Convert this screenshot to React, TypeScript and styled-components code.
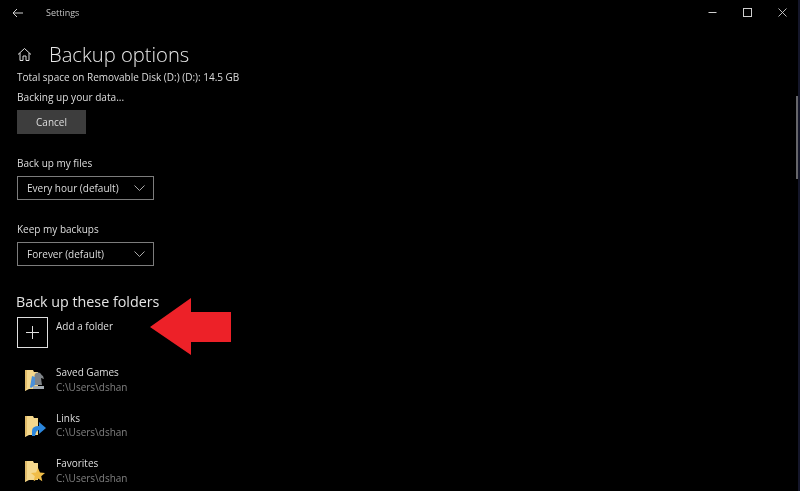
import styled, { createGlobalStyle } from "styled-components";

const GlobalStyle = createGlobalStyle`
  html, body {
    margin: 0;
    padding: 0;
    background: #000;
    overflow: hidden;
  }
`;

const Window = styled.div`
  position: relative;
  width: 800px;
  height: 491px;
  overflow: hidden;
  background: #000;
  color: #e6e6e6;
  font-family: "Open Sans", "Liberation Sans", sans-serif;
  filter: blur(0.3px);
`;
const TitleBar = styled.header`
  height: 25px;
  display: flex;
  align-items: center;
  padding-left: 12px;
`;
const BackButton = styled.span`
  display: flex;
  width: 34px;
`;
const AppName = styled.span`
  font-size: 9px;
  color: #c4c4c4;
`;
const WindowButtons = styled.div`
  margin-left: auto;
  margin-right: 13px;
  display: flex;
  gap: 26px;
  align-items: center;
  color: #cfcfcf;
`;
const Content = styled.main`
  padding: 15px 0 0 17px;
`;
const PageTitle = styled.div`
  display: flex;
  align-items: center;
  height: 28px;
`;
const HomeIcon = styled.span`
  display: flex;
  width: 32px;
`;
const Heading = styled.h1`
  margin: 0;
  font-size: 20.2px;
  font-weight: 300;
  color: #e8e8e8;
`;
const Info = styled.div`
  font-size: 10px;
  height: 14px;
  line-height: 14px;
  margin-top: 2px;
  color: #dedede;
`;
const Status = styled(Info)`
  margin-top: 6px;
  font-size: 10.1px;
`;
const CancelButton = styled.button`
  display: block;
  width: 69px;
  height: 24px;
  margin-top: 6px;
  padding: 0;
  border: 0;
  background: #3d3d3d;
  color: #dedede;
  font: inherit;
  font-size: 10px;
`;
const FieldLabel = styled.div`
  font-size: 10px;
  line-height: 14px;
  color: #dedede;
`;
const Field = styled.div`
  margin-top: 22px;
  &:first-of-type {
    margin-top: 24px;
  }
`;
const Select = styled.div`
  box-sizing: border-box;
  width: 137px;
  height: 24px;
  margin-top: 6px;
  padding: 0 8px 0 9px;
  display: flex;
  align-items: center;
  justify-content: space-between;
  border: 1px solid #7c7c7c;
  font-size: 10px;
  color: #dedede;
`;
const SectionTitle = styled.h2`
  margin: 26px 0 0 -1px;
  font-size: 14.3px;
  line-height: 20px;
  font-weight: 400;
  color: #e4e4e4;
`;
const AddRow = styled.div`
  display: flex;
  gap: 8px;
  margin-top: 5px;
`;
const AddBox = styled.div`
  box-sizing: border-box;
  width: 31px;
  height: 31px;
  display: flex;
  align-items: center;
  justify-content: center;
  border: 1px solid #e0e0e0;
`;
const AddLabel = styled.div`
  font-size: 10px;
  line-height: 14px;
  margin-top: 2px;
  color: #dedede;
`;
const FolderList = styled.div`
  display: flex;
  flex-direction: column;
  gap: 15.5px;
  margin-top: 17px;
  padding-left: 6px;
`;
const FolderRow = styled.div`
  display: flex;
  gap: 9px;
  height: 30px;
`;
const FolderIcon = styled.span`
  display: flex;
  align-items: center;
  width: 24px;
`;
const FolderText = styled.div`
  display: flex;
  flex-direction: column;
  font-size: 10px;
  line-height: 14.5px;
`;
const FolderName = styled.span`
  color: #dedede;
`;
const FolderPath = styled.span`
  color: #808080;
`;
const Scrollbar = styled.div`
  position: absolute;
  top: 96px;
  right: 2px;
  width: 2px;
  height: 83px;
  background: #66666a;
`;
const WindowEdge = styled.div`
  position: absolute;
  top: 0;
  right: 0;
  bottom: 0;
  width: 2px;
  background: #14162a;
`;
const Arrow = styled.svg`
  position: absolute;
  left: 150px;
  top: 298px;
`;

const folders = [
  { name: "Saved Games", badge: "games" },
  { name: "Links", badge: "link" },
  { name: "Favorites", badge: "star" },
];

function FolderGlyph({ badge }: { badge: string }) {
  return (
    <svg width="24" height="26" viewBox="0 0 24 26">
      <path d="M2 3h8l1 2h4v17H6l-4 2z" fill="#f5d88c" />
      <path d="M2 3h2v18l-2 3z" fill="#e2bd6c" />
      {badge === "games" && (
        <>
          <circle cx="15" cy="9" r="3.500" fill="#7f8488" />
          <path d="M11 11l6-4 3 2 1 3-3-1 1 7h-9q-1-4 1-7z" fill="#7f8488" />
          <path d="M10 19h11v3H10z" fill="#a4acb2" />
          <path d="M9 9l3 1v8l-4 3-1-1z" fill="#4a90d9" />
        </>
      )}
      {badge === "link" && (
        <path d="M9 23v-5q0-5 7-5V9l7 6-7 6v-4q-3 0-4 6z" fill="#2b86dc" />
      )}
      {badge === "star" && (
        <path d="M15 10l2 4.600 5 .5-3.800 3.200 1.100 4.900-4.300-2.600-4.300 2.600 1.100-4.900-3.800-3.200 5-.5z" fill="#f0bd48" />
      )}
    </svg>
  );
}

function Chevron() {
  return (
    <svg width="11" height="6" viewBox="0 0 11 6" fill="none" stroke="#bdbdbd" strokeWidth="0.9">
      <path d="M0.500 0.500l5 5 5-5" />
    </svg>
  );
}

export default function App() {
  return (
    <Window>
      <GlobalStyle />
      <TitleBar>
        <BackButton>
          <svg width="12" height="10" viewBox="0 0 12 10" fill="none" stroke="#d0d0d0" strokeWidth="1">
            <path d="M11 5H1M5 1L1 5l4 4" />
          </svg>
        </BackButton>
        <AppName>Settings</AppName>
        <WindowButtons>
          <svg width="9" height="9" viewBox="0 0 9 9" stroke="currentColor" strokeWidth="1">
            <path d="M0.500 4.500h8" />
          </svg>
          <svg width="9" height="9" viewBox="0 0 9 9" fill="none" stroke="currentColor" strokeWidth="1">
            <rect x="0.500" y="0.500" width="8" height="8" />
          </svg>
          <svg width="9" height="9" viewBox="0 0 9 9" stroke="currentColor" strokeWidth="0.9">
            <path d="M0.500 0.500l8 8M8.500 0.500l-8 8" />
          </svg>
        </WindowButtons>
      </TitleBar>
      <Content>
        <PageTitle>
          <HomeIcon>
            <svg width="15" height="15" viewBox="0 0 15 15" fill="none" stroke="#dedede" strokeWidth="1">
              <path d="M1 7.500L7.500 1.500 14 7.500M3 6v7.500h3V9h3v4.500h3V6" />
            </svg>
          </HomeIcon>
          <Heading>Backup options</Heading>
        </PageTitle>
        <Info>Total space on Removable Disk (D:) (D:): 14.5 GB</Info>
        <Status>Backing up your data...</Status>
        <CancelButton>Cancel</CancelButton>
        <Field>
          <FieldLabel>Back up my files</FieldLabel>
          <Select>
            Every hour (default)
            <Chevron />
          </Select>
        </Field>
        <Field>
          <FieldLabel>Keep my backups</FieldLabel>
          <Select>
            Forever (default)
            <Chevron />
          </Select>
        </Field>
        <SectionTitle>Back up these folders</SectionTitle>
        <AddRow>
          <AddBox>
            <svg width="13" height="13" viewBox="0 0 13 13" stroke="#e0e0e0" strokeWidth="1">
              <path d="M6.500 0v13M0 6.500h13" />
            </svg>
          </AddBox>
          <AddLabel>Add a folder</AddLabel>
        </AddRow>
        <FolderList>
          {folders.map((f) => (
            <FolderRow key={f.name}>
              <FolderIcon>
                <FolderGlyph badge={f.badge} />
              </FolderIcon>
              <FolderText>
                <FolderName>{f.name}</FolderName>
                <FolderPath>C:\Users\dshan</FolderPath>
              </FolderText>
            </FolderRow>
          ))}
        </FolderList>
      </Content>
      <Arrow width="82" height="58" viewBox="0 0 82 58">
        <path d="M0 29L41 0v14h40v30H41v13z" fill="#ed2128" />
      </Arrow>
      <Scrollbar />
      <WindowEdge />
    </Window>
  );
}
